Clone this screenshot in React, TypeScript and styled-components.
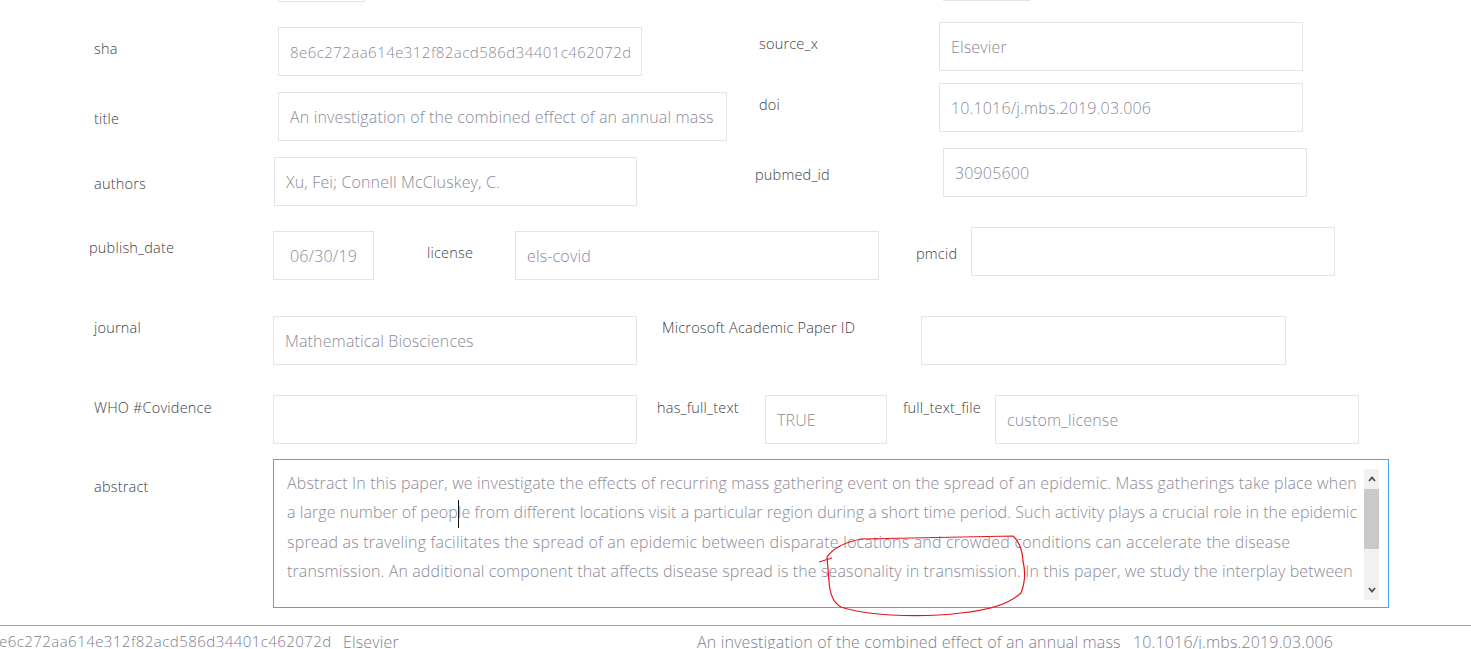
import React from "react";
import styled, { createGlobalStyle } from "styled-components";

const GlobalStyle = createGlobalStyle`
  html, body { margin: 0; padding: 0; background: #ffffff; overflow: hidden; }
  body { font-family: "Open Sans", "Liberation Sans", sans-serif; }
  * { box-sizing: border-box; }
`;

const Page = styled.div`
  width: 1471px;
  height: 649px;
  overflow: hidden;
  display: flex;
  flex-direction: column;
`;

const Row = styled.div<{ $h: number; $mt?: number }>`
  display: flex;
  align-items: flex-start;
  flex: none;
  height: ${(p) => p.$h}px;
  margin-top: ${(p) => p.$mt ?? 0}px;
`;

const Label = styled.label<{ $ml: number; $w: number; $mt: number }>`
  flex: none;
  margin-left: ${(p) => p.$ml}px;
  width: ${(p) => p.$w}px;
  margin-top: ${(p) => p.$mt}px;
  font-size: 14.5px;
  line-height: 20px;
  font-weight: 300;
  color: #3e3e46;
  white-space: nowrap;
  letter-spacing: 0.2px;
`;

const Input = styled.input<{ $w: number; $mt?: number; $ml?: number; $center?: boolean; $mono?: boolean }>`
  flex: none;
  width: ${(p) => p.$w}px;
  height: 49px;
  margin: ${(p) => p.$mt ?? 0}px 0 0 ${(p) => p.$ml ?? 0}px;
  border: 1px solid #e3e3e9;
  border-radius: 0;
  padding: 0 11px;
  background: #fff;
  font-family: inherit;
  font-size: ${(p) => (p.$mono ? 15 : 16)}px;
  letter-spacing: ${(p) => (p.$mono ? 0.45 : 0.15)}px;
  font-weight: 300;
  color: #8b8a98;
  text-align: ${(p) => (p.$center ? "center" : "left")};
  outline: none;
`;

const AbstractBox = styled.div`
  position: relative;
  flex: none;
  width: 1116px;
  height: 149px;
  border: 1px solid #4ea6e8;
  padding: 9px 9px 7px 9px;
  display: flex;
  align-items: flex-start;
`;

const AbstractText = styled.div`
  flex: 1;
  height: 118px;
  padding-left: 4px;
  overflow: hidden;
  font-size: 16px;
  font-weight: 300;
  line-height: 29.3px;
  color: #8b8a98;
`;

const Line = styled.div<{ $ls?: number }>`
  white-space: nowrap;
  letter-spacing: ${(p) => p.$ls ?? 0.15}px;
`;

const Caret = styled.span`
  display: inline-block;
  width: 1px;
  height: 28px;
  margin: 0 -1px 0 0;
  background: #111;
  vertical-align: middle;
`;

const Track = styled.div`
  flex: none;
  width: 15px;
  height: 131px;
  background: #f1f1f1;
  display: flex;
  flex-direction: column;
`;

const ArrowBtn = styled.div`
  height: 20px;
  display: flex;
  align-items: center;
  justify-content: center;
`;

const Thumb = styled.div`
  height: 60px;
  background: #c9c9c9;
`;

const Spacer = styled.div`
  flex: 1;
`;

const Annotation = styled.svg`
  position: absolute;
  left: 0;
  top: 0;
  overflow: visible;
  pointer-events: none;
`;

const FooterLine = styled.div`
  flex: none;
  height: 1px;
  background: #9d9bab;
`;

const FooterRow = styled.div`
  display: flex;
  margin-left: -10px;
  padding-top: 5px;
  font-size: 16px;
  letter-spacing: 0.15px;
  font-weight: 300;
  color: #7e7d8e;
  white-space: nowrap;
`;

const Cell = styled.div<{ $w?: number; $mono?: boolean }>`
  flex: none;
  width: ${(p) => (p.$w ? `${p.$w}px` : "auto")};
  font-size: ${(p) => (p.$mono ? 15 : 16)}px;
  letter-spacing: ${(p) => (p.$mono ? 0.45 : 0.15)}px;
`;

const Chevron = ({ up }: { up?: boolean }) => (
  <svg width="8" height="6" viewBox="0 0 8 6">
    <path
      d={up ? "M1 5 L4 1.5 L7 5" : "M1 1 L4 4.5 L7 1"}
      fill="none"
      stroke="#505050"
      strokeWidth="1.8"
    />
  </svg>
);

export default function App() {
  return (
    <>
      <GlobalStyle />
      <Page>
        <Row $h={70} $mt={-48}>
          <Input $ml={278} $mt={1} $w={87} readOnly defaultValue="" />
          <Input $ml={578} $mt={0} $w={87} readOnly defaultValue="" />
        </Row>
        <Row $h={61}>
          <Label $ml={94} $w={184} $mt={17}>sha</Label>
          <Input $w={364} $mt={5} $mono readOnly defaultValue="8e6c272aa614e312f82acd586d34401c462072d" />
          <Label $ml={117} $w={180} $mt={12}>source_x</Label>
          <Input $w={364} readOnly defaultValue="Elsevier" />
        </Row>
        <Row $h={65}>
          <Label $ml={94} $w={184} $mt={26}>title</Label>
          <Input $w={449} $mt={9} readOnly defaultValue="An investigation of the combined effect of an annual mass" />
          <Label $ml={32} $w={180} $mt={12}>doi</Label>
          <Input $w={364} readOnly defaultValue="10.1016/j.mbs.2019.03.006" />
        </Row>
        <Row $h={79}>
          <Label $ml={94} $w={180} $mt={26}>authors</Label>
          <Input $w={363} $mt={9} readOnly defaultValue="Xu, Fei; Connell McCluskey, C." />
          <Label $ml={118} $w={188} $mt={17}>pubmed_id</Label>
          <Input $w={364} readOnly defaultValue="30905600" />
        </Row>
        <Row $h={89}>
          <Label $ml={89} $w={184} $mt={11}>publish_date</Label>
          <Input $w={101} $mt={4} $center readOnly defaultValue="06/30/19" />
          <Label $ml={53} $w={88} $mt={16}>license</Label>
          <Input $w={364} $mt={4} readOnly defaultValue="els-covid" />
          <Label $ml={37} $w={55} $mt={17}>pmcid</Label>
          <Input $w={364} readOnly defaultValue="" />
        </Row>
        <Row $h={79}>
          <Label $ml={94} $w={179} $mt={2}>journal</Label>
          <Input $w={364} readOnly defaultValue="Mathematical Biosciences" />
          <Label $ml={25} $w={259} $mt={2}>Microsoft Academic Paper ID</Label>
          <Input $w={365} readOnly defaultValue="" />
        </Row>
        <Row $h={64}>
          <Label $ml={94} $w={179} $mt={3}>WHO #Covidence</Label>
          <Input $w={364} readOnly defaultValue="" />
          <Label $ml={20} $w={108} $mt={3}>has_full_text</Label>
          <Input $w={122} readOnly defaultValue="TRUE" />
          <Label $ml={16} $w={92} $mt={3}>full_text_file</Label>
          <Input $w={364} readOnly defaultValue="custom_license" />
        </Row>
        <Row $h={166}>
          <Label $ml={94} $w={179} $mt={18}>abstract</Label>
          <AbstractBox>
            <AbstractText>
              <Line>
                Abstract In this paper, we investigate the effects of recurring mass gathering event on the spread of an epidemic. Mass gatherings take place when
              </Line>
              <Line $ls={0.06}>
                a large number of peop<Caret />le from different locations visit a particular region during a short time period. Such activity plays a crucial role in the epidemic
              </Line>
              <Line $ls={0.2}>
                spread as traveling facilitates the spread of an epidemic between disparate locations and crowded conditions can accelerate the disease
              </Line>
              <Line $ls={0.12}>
                transmission. An additional component that affects disease spread is the seasonality in transmission. In this paper, we study the interplay between
              </Line>
              <Line>
                two disparate locations where people from one location visit the other location for a mass gathering event. We construct a mathematical model
              </Line>
              <Line>
                incorporating seasonal transmission and recurring mass gatherings, and analyse the resulting dynamics of the epidemic.
              </Line>
            </AbstractText>
            <Track>
              <ArrowBtn><Chevron up /></ArrowBtn>
              <Thumb />
              <Spacer />
              <ArrowBtn><Chevron /></ArrowBtn>
            </Track>
            <Annotation width="1116" height="149" viewBox="0 0 1116 149">
              <path
                d="M545 102 L558 98 M553 97 Q562 84 587 79 L739 76 Q748 84 749 101 Q753 118 747 133 Q730 149 687 153 Q655 157 617 155 Q585 153 567 147 Q556 141 555 121 L553 97"
                fill="none"
                stroke="#e8141c"
                strokeWidth="1.2"
              />
            </Annotation>
          </AbstractBox>
        </Row>
        <FooterLine />
        <FooterRow>
          <Cell $w={353} $mono>8e6c272aa614e312f82acd586d34401c462072d</Cell>
          <Cell $w={354}>Elsevier</Cell>
          <Cell $w={436}>An investigation of the combined effect of an annual mass</Cell>
          <Cell>10.1016/j.mbs.2019.03.006</Cell>
        </FooterRow>
      </Page>
    </>
  );
}
